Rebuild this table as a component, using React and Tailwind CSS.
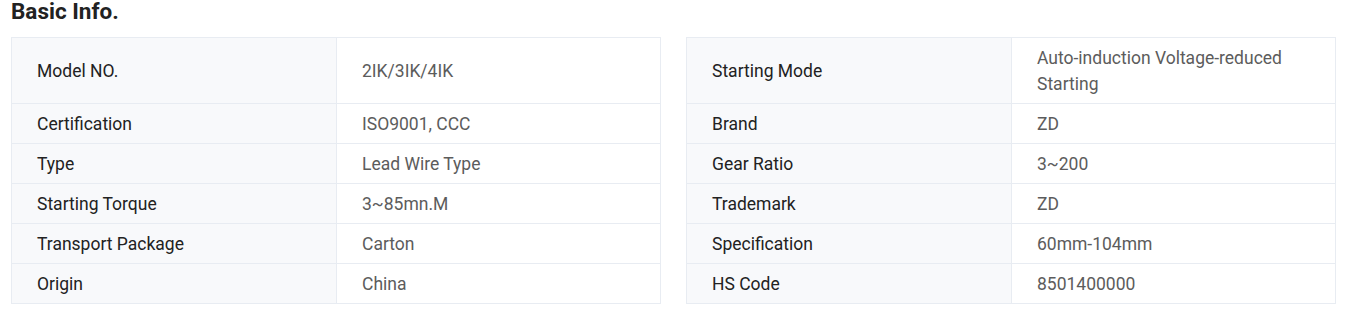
import React from 'react';

const rows = [
  [['Model NO.', '2IK/3IK/4IK'], ['Starting Mode', 'Auto-induction Voltage-reduced Starting']],
  [['Certification', 'ISO9001, CCC'], ['Brand', 'ZD']],
  [['Type', 'Lead Wire Type'], ['Gear Ratio', '3~200']],
  [['Starting Torque', '3~85mn.M'], ['Trademark', 'ZD']],
  [['Transport Package', 'Carton'], ['Specification', '60mm-104mm']],
  [['Origin', 'China'], ['HS Code', '8501400000']],
];

const Cell = ({ label, value, first }) => (
  <div className={`flex border-x border-b border-[#e8ecf2] ${first ? 'border-t' : ''}`}>
    <div className="w-[325px] shrink-0 bg-[#f8f9fb] border-r border-[#e8ecf2] pl-[25px] pr-4 py-[6.5px] flex items-center text-[#222]">
      {label}
    </div>
    <div className="flex-1 pl-[25px] pr-[25px] py-[6.5px] flex items-center text-[#5c5c5c]">
      {value}
    </div>
  </div>
);

export default function App() {
  return (
    <div className="bg-white w-[1354px] h-[325px] pl-[11px] pr-[18px] font-['Roboto',sans-serif]">
      <h2 className="text-[22.5px] leading-[22px] font-bold text-[#222]">Basic Info.</h2>
      <div className="mt-[15px] grid grid-cols-2 gap-x-[25px] text-[17.5px] leading-[26px]">
        {rows.map((pair, i) => (
          <React.Fragment key={i}>
            <Cell label={pair[0][0]} value={pair[0][1]} first={i === 0} />
            <Cell label={pair[1][0]} value={pair[1][1]} first={i === 0} />
          </React.Fragment>
        ))}
      </div>
    </div>
  );
}
